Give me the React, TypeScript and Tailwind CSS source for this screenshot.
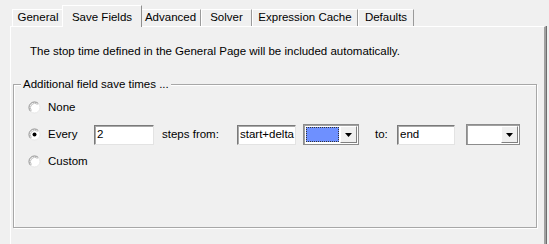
import { ReactNode } from "react";

type TabItem = { label: string; width: number; active?: boolean };

const tabs: TabItem[] = [
  { label: "General", width: 52 },
  { label: "Save Fields", width: 76, active: true },
  { label: "Advanced", width: 61 },
  { label: "Solver", width: 51 },
  { label: "Expression Cache", width: 106 },
  { label: "Defaults", width: 56 },
];

function Tab({ tab }: { tab: TabItem }) {
  if (tab.active) {
    return (
      <div
        className="relative z-10 -mx-[2px] -mb-px flex h-[22px] items-start justify-center border-l border-t border-r border-l-white border-t-white border-r-[#8f8f8f] bg-[#f0f0f0] pt-[3px]"
        style={{ width: tab.width + 4 }}
      >
        {tab.label}
      </div>
    );
  }
  return (
    <div
      className="flex h-[17px] items-center justify-center border-l border-t border-r border-l-white border-t-white border-r-[#9a9a9a] bg-[#f0f0f0]"
      style={{ width: tab.width }}
    >
      {tab.label}
    </div>
  );
}

function Radio({ checked }: { checked?: boolean }) {
  return (
    <svg width="13" height="13" viewBox="0 0 13 13" className="shrink-0">
      <circle cx="6.5" cy="6.5" r="5.5" fill="#fff" />
      <path d="M2.6 10.4 A5.5 5.5 0 0 1 10.4 2.6" fill="none" stroke="#8a8a8a" strokeWidth="1" />
      <path d="M3.4 9.6 A4.4 4.4 0 0 1 9.6 3.4" fill="none" stroke="#c0c0c0" strokeWidth="1" />
      <path d="M10.4 2.6 A5.5 5.5 0 0 1 2.6 10.4" fill="none" stroke="#e8e8e8" strokeWidth="1" />
      {checked && <circle cx="6.5" cy="6.5" r="2" fill="#000" />}
    </svg>
  );
}

function TextBox({ value, width }: { value: string; width: number }) {
  return (
    <div
      className="flex h-[20px] items-center overflow-hidden border border-t-[#7a7a7a] border-l-[#7a7a7a] border-b-[#e3e3e3] border-r-[#e3e3e3] bg-white pl-[2px] shadow-[inset_1px_1px_0_#a8a8a8] whitespace-nowrap"
      style={{ width }}
    >
      {value}
    </div>
  );
}

function Combo({ width, children }: { width: number; children?: ReactNode }) {
  return (
    <div
      className="flex h-[21px] items-stretch border border-[#8c8c8c] bg-white p-px shadow-[inset_1px_1px_0_#a0a0a0]"
      style={{ width }}
    >
      <div className="flex flex-1 items-stretch p-[1px]">{children}</div>
      <div className="flex w-[17px] items-center justify-center border border-t-white border-l-white border-b-[#808080] border-r-[#808080] bg-[#f0f0f0]">
        <svg width="7" height="4" viewBox="0 0 7 4">
          <path d="M0 0h7L3.5 4z" fill="#000" />
        </svg>
      </div>
    </div>
  );
}

function RadioRow({ label, checked, children }: { label: string; checked?: boolean; children?: ReactNode }) {
  return (
    <div className="flex h-[27px] items-center">
      <div className="ml-[14px] flex w-[66px] items-center">
        <Radio checked={checked} />
        <span className="ml-[7px]">{label}</span>
      </div>
      {children}
    </div>
  );
}

export default function App() {
  return (
    <div className="h-[244px] w-[549px] overflow-hidden bg-[#f0f0f0] font-['Liberation_Sans',Arial,sans-serif] text-[11.5px] text-black">
      <div className="flex h-[26px] items-end pl-[12px]">
        {tabs.map((tab) => (
          <Tab key={tab.label} tab={tab} />
        ))}
      </div>

      <div className="ml-[10px] h-[218px] w-[536px] border-l border-t border-r-2 border-l-white border-t-white border-r-[#a0a0a0] shadow-[1px_0_0_#6e6e6e]">
        <p className="pl-[19px] pt-[18px] leading-[13px]">
          The stop time defined in the General Page will be included automatically.
        </p>

        <fieldset className="mt-[20px] ml-[2px] h-[150px] w-[524px] border border-[#a7a7a7] px-0 pt-[3px] shadow-[inset_1px_1px_0_#fff,1px_1px_0_#fff]">
          <legend className="ml-[7px] bg-[#f0f0f0] px-[2px] leading-[13px]">
            Additional field save times ...
          </legend>

          <RadioRow label="None" />
          <RadioRow label="Every" checked>
            <TextBox value="2" width={60} />
            <span className="ml-[8px] w-[75px]">steps from:</span>
            <TextBox value="start+delta" width={59} />
            <div className="ml-[7px]">
              <Combo width={56}>
                <div className="flex-1 border border-dotted border-[#333] bg-[#6e90ff]" />
              </Combo>
            </div>
            <span className="ml-[16px] w-[22px]">to:</span>
            <TextBox value="end" width={58} />
            <div className="ml-[11px]">
              <Combo width={54} />
            </div>
          </RadioRow>
          <RadioRow label="Custom" />
        </fieldset>
      </div>
    </div>
  );
}
